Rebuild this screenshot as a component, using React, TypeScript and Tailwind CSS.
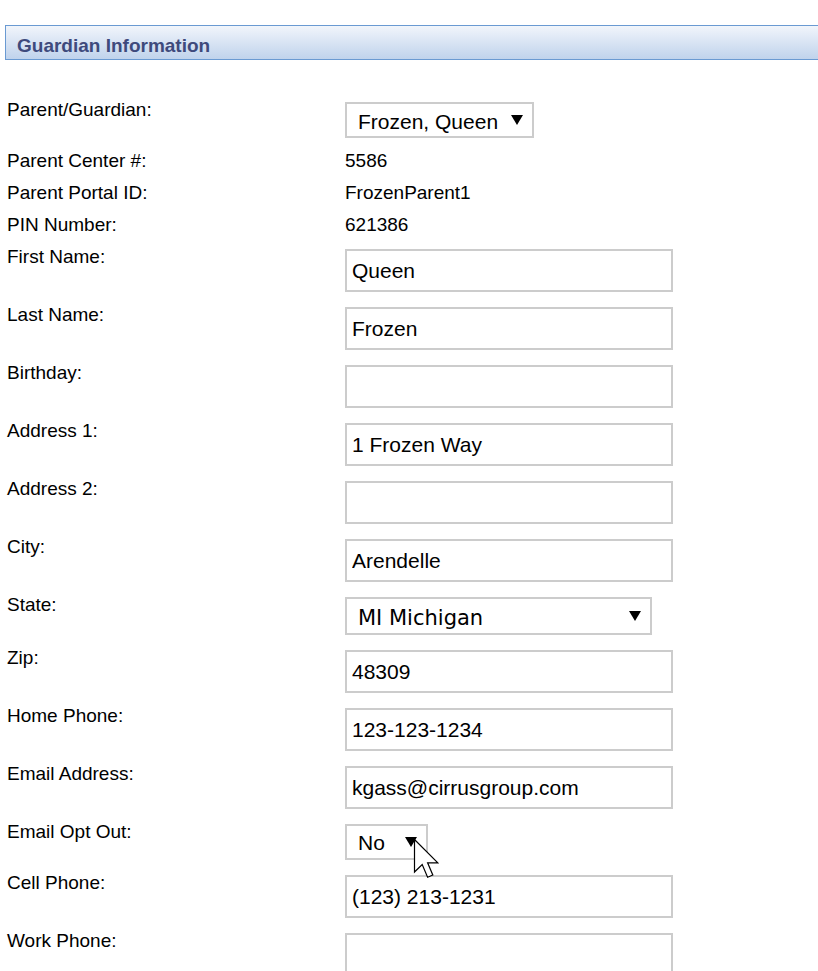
import React from "react";

const Label = ({ children }: { children: React.ReactNode }) => (
  <div className="w-[338px] shrink-0 -mt-[3px] text-[19px] leading-[22px] text-black">{children}</div>
);

const Arrow = () => (
  <svg width="12" height="10" viewBox="0 0 12 10" className="shrink-0">
    <polygon points="0,0 12,0 6,10" fill="#000" />
  </svg>
);

const InputRow = ({ label, value = "" }: { label: string; value?: string }) => (
  <div className="flex h-[58px]">
    <Label>{label}</Label>
    <input
      readOnly
      value={value}
      className="box-border w-[328px] h-[43px] border-2 border-[#cccccc] bg-white pl-[5px] text-[21px] text-black outline-none"
      style={{ fontFamily: '"Liberation Sans", Arial, sans-serif' }}
    />
  </div>
);

const SelectRow = ({
  label,
  value,
  width,
  height,
  rowH,
  font,
  textClass,
}: {
  label: string;
  value: string;
  width: string;
  height: string;
  rowH: string;
  font: string;
  textClass: string;
}) => (
  <div className={`flex ${rowH}`}>
    <Label>{label}</Label>
    <div
      className={`box-border ${width} ${height} border-2 border-[#cccccc] bg-white flex items-center justify-between pl-[11px] pr-[9px] text-[21px] text-black`}
      style={{ fontFamily: font }}
    >
      <span className={textClass}>{value}</span>
      <Arrow />
    </div>
  </div>
);

const TextRow = ({ label, value }: { label: string; value: string }) => (
  <div className="flex h-[32px]">
    <Label>{label}</Label>
    <div className="-mt-[3px] text-[19px] leading-[22px] text-black">{value}</div>
  </div>
);

export default function App() {
  const arial = '"Liberation Sans", Arial, sans-serif';
  const verdana = '"DejaVu Sans", Verdana, sans-serif';
  return (
    <div
      className="relative w-[818px] h-[971px] overflow-hidden bg-white"
      style={{ fontFamily: arial }}
    >
      <div className="ml-[5px] mt-[25px] w-[830px] h-[35px] box-border border border-[#6a9ad2] bg-gradient-to-b from-[#f1f5fb] to-[#c0d3ec] pl-[11px] pt-[9px]">
        <div className="text-[19px] leading-[22px] font-bold text-[#3e4a7c]">Guardian Information</div>
      </div>

      <div className="pl-[7px] mt-[42px]">
        <SelectRow label="Parent/Guardian:" value="Frozen, Queen" width="w-[189px]" height="h-[36px]" rowH="h-[51px]" font={arial} textClass="relative top-[2px]" />
        <TextRow label="Parent Center #:" value="5586" />
        <TextRow label="Parent Portal ID:" value="FrozenParent1" />
        <TextRow label="PIN Number:" value="621386" />
        <InputRow label="First Name:" value="Queen" />
        <InputRow label="Last Name:" value="Frozen" />
        <InputRow label="Birthday:" />
        <InputRow label="Address 1:" value="1 Frozen Way" />
        <InputRow label="Address 2:" />
        <InputRow label="City:" value="Arendelle" />
        <SelectRow label="State:" value="MI Michigan" width="w-[307px]" height="h-[38px]" rowH="h-[53px]" font={verdana} textClass="relative top-[3px]" />
        <InputRow label="Zip:" value="48309" />
        <InputRow label="Home Phone:" value="123-123-1234" />
        <InputRow label="Email Address:" value="kgass@cirrusgroup.com" />
        <SelectRow label="Email Opt Out:" value="No" width="w-[83px]" height="h-[36px]" rowH="h-[51px]" font={arial} textClass="relative top-[1px]" />
        <InputRow label="Cell Phone:" value="(123) 213-1231" />
        <InputRow label="Work Phone:" />
      </div>

      <svg
        className="absolute left-[413px] top-[838px]"
        width="28"
        height="42"
        viewBox="0 0 14 21"
      >
        <path
          d="M0.75,0.75 L0.75,17 L4.6,13.3 L7.3,19.6 L9.9,18.5 L7.3,12.4 L12.4,12.4 Z"
          fill="#ffffff"
          stroke="#000000"
          strokeWidth="0.6"
          strokeLinejoin="miter"
        />
      </svg>
    </div>
  );
}
